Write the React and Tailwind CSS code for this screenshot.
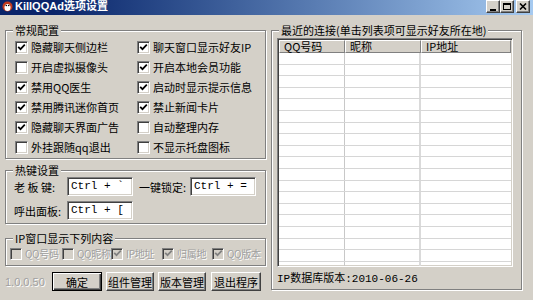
import React from "react";

const Check = ({ checked, disabled, small }) => (
  <span
    className={`${small ? "w-[12px] h-[12px]" : "w-[13px] h-[13px]"} shrink-0 border border-t-[#808080] border-l-[#808080] border-b-white border-r-white shadow-[inset_1px_1px_0_#404040,inset_-1px_-1px_0_#d4d0c8] flex items-center justify-center ${
      disabled ? "bg-[#d4d0c8]" : "bg-white"
    }`}
  >
    {checked && (
      <svg width="9" height="9" viewBox="0 0 9 9">
        <path
          d="M1.2 3.8 L3.5 6.2 L7.8 1.6"
          fill="none"
          stroke={disabled ? "#808080" : "#000"}
          strokeWidth="1.7"
        />
      </svg>
    )}
  </span>
);

const Group = ({ title, className, children }) => (
  <div
    className={`relative border border-[#808080] shadow-[inset_1px_1px_0_#fff,1px_1px_0_#fff] ${className}`}
  >
    <span className="absolute left-[7px] -top-[8px] px-[2px] bg-[#d4d0c8] leading-[14px] text-black whitespace-nowrap">
      {title}
    </span>
    {children}
  </div>
);

const CheckRow = ({ label, checked }) => (
  <div className="h-[20px] flex items-center gap-[3px] whitespace-nowrap">
    <Check checked={checked} />
    <span className="leading-[14px]">{label}</span>
  </div>
);

const Input = ({ value }) => (
  <div className="w-[66px] h-[19px] bg-white border border-t-[#808080] border-l-[#808080] border-b-white border-r-white shadow-[inset_1px_1px_0_#404040,inset_-1px_-1px_0_#d4d0c8] flex items-center pl-[3px] font-['Liberation_Mono',monospace] text-[11px] leading-[13px] whitespace-pre">
    {value}
  </div>
);

const Btn = ({ children, w, def }) => (
  <div
    className={`${w} h-[19px] flex items-center justify-center bg-[#d4d0c8] ${
      def
        ? "border border-black shadow-[inset_1px_1px_0_#fff,inset_-1px_-1px_0_#404040,inset_-2px_-2px_0_#808080]"
        : "border border-t-white border-l-white border-b-[#404040] border-r-[#404040] shadow-[inset_-1px_-1px_0_#808080]"
    } leading-[14px] whitespace-nowrap`}
  >
    {children}
  </div>
);

const DisCheck = ({ label, checked, w }) => (
  <div className={`${w} flex items-center gap-[3px] whitespace-nowrap`}>
    <Check checked={checked} disabled small />
    <span className="leading-[13px] text-[10px] tracking-[-0.3px] text-[#a0a0a0] [text-shadow:1px_1px_0_#fff]">
      {label}
    </span>
  </div>
);

const TitleBtn = ({ children, className }) => (
  <div
    className={`w-[14px] h-[13px] bg-[#d4d0c8] border border-t-white border-l-white border-b-[#404040] border-r-[#404040] shadow-[inset_-1px_-1px_0_#808080] flex items-center justify-center ${className}`}
  >
    {children}
  </div>
);

export default function App() {
  const rows = Array.from({ length: 19 });
  return (
    <div className="w-[533px] h-[300px] bg-[#d4d0c8] overflow-hidden font-['Noto_Sans_CJK_SC','Noto_Sans',sans-serif] text-[11px] text-black">
      {/* title bar */}
      <div className="h-[15px] bg-linear-to-r from-[#0a246a] from-10% to-[#a6caf0] flex items-start pr-[3px]">
        <div className="w-[12px] h-[12px] ml-[1px] flex items-center justify-center">
          <svg width="11" height="11" viewBox="0 0 11 11">
            <circle cx="5.5" cy="5.5" r="5" fill="#c23a1e" />
            <ellipse cx="5.5" cy="6.5" rx="3" ry="3.5" fill="#fff" />
            <circle cx="4.3" cy="4.5" r="0.8" fill="#000" />
            <circle cx="6.7" cy="4.5" r="0.8" fill="#000" />
          </svg>
        </div>
        <span className="ml-[2px] text-white font-bold text-[11px] leading-[13px] font-['Liberation_Sans','Noto_Sans_CJK_SC',sans-serif]">
          KillQQAd选项设置
        </span>
        <div className="ml-auto flex items-start">
          <TitleBtn>
            <span className="w-[6px] h-[2px] bg-black mt-[6px] mr-[1px]" />
          </TitleBtn>
          <TitleBtn>
            <span className="w-[8px] h-[7px] border border-black border-t-2" />
          </TitleBtn>
          <TitleBtn className="ml-[2px]">
            <svg width="8" height="7" viewBox="0 0 8 7">
              <path d="M1 0.5 L7 6.5 M7 0.5 L1 6.5" stroke="#000" strokeWidth="1.6" />
            </svg>
          </TitleBtn>
        </div>
      </div>

      {/* body */}
      <div className="flex pl-[5px] pt-[15px] gap-[5px]">
        {/* left column */}
        <div className="w-[261px] flex flex-col">
          <Group title="常规配置" className="h-[129px] pt-[6px] pl-[9px]">
            <div className="grid grid-cols-[122px_1fr]">
              <CheckRow label="隐藏聊天侧边栏" checked />
              <CheckRow label="聊天窗口显示好友IP" checked />
              <CheckRow label="开启虚拟摄像头" />
              <CheckRow label="开启本地会员功能" checked />
              <CheckRow label="禁用QQ医生" checked />
              <CheckRow label="启动时显示提示信息" checked />
              <CheckRow label="禁用腾讯迷你首页" checked />
              <CheckRow label="禁止新闻卡片" checked />
              <CheckRow label="隐藏聊天界面广告" checked />
              <CheckRow label="自动整理内存" />
              <CheckRow label="外挂跟随qq退出" />
              <CheckRow label="不显示托盘图标" />
            </div>
          </Group>

          <Group title="热键设置" className="mt-[11px] h-[54px] pt-[6px] pl-[8px] flex flex-col gap-[5px]">
            <div className="flex items-center h-[19px]">
              <span className="w-[53px] leading-[14px] whitespace-pre">老 板 键:</span>
              <Input value="Ctrl + `" />
              <span className="ml-[6px] w-[51px] leading-[14px]">一键锁定:</span>
              <Input value="Ctrl + =" />
            </div>
            <div className="flex items-center h-[19px]">
              <span className="w-[53px] leading-[14px]">呼出面板:</span>
              <Input value="Ctrl + [" />
            </div>
          </Group>

          <Group title="IP窗口显示下列内容" className="mt-[14px] h-[28px] pt-[8px] pl-[4px] flex items-start">
            <DisCheck w="w-[52px]" label="QQ号码" />
            <DisCheck w="w-[49px]" label="QQ昵称" />
            <DisCheck w="w-[51px]" label="IP地址" checked />
            <DisCheck w="w-[50px]" label="归属地" checked />
            <DisCheck w="w-[50px]" label="QQ版本" checked />
          </Group>

          <div className="mt-[6px] flex items-center">
            <span className="w-[47px] text-[#a0a0a0] [text-shadow:1px_1px_0_#fff] leading-[14px] font-['Liberation_Sans',sans-serif]">
              1.0.0.50
            </span>
            <Btn w="w-[50px]" def>确定</Btn>
            <div className="w-[4px]" />
            <Btn w="w-[48px]">组件管理</Btn>
            <div className="w-[4px]" />
            <Btn w="w-[48px]">版本管理</Btn>
            <div className="w-[5px]" />
            <Btn w="w-[50px]">退出程序</Btn>
          </div>
        </div>

        {/* right group */}
        <Group
          title="最近的连接(单击列表项可显示好友所在地)"
          className="w-[251px] h-[260px] pt-[7px] pl-[5px] flex flex-col"
        >
          <div className="w-[236px] h-[229px] bg-white border border-t-[#808080] border-l-[#808080] border-b-white border-r-white shadow-[inset_1px_1px_0_#404040,inset_-1px_-1px_0_#d4d0c8] p-[1px] overflow-hidden flex flex-col">
            <div className="h-[13px] flex shrink-0">
              <div className="w-[66px] bg-[#d4d0c8] border-t border-l border-t-white border-l-white border-r border-b border-r-[#808080] border-b-[#808080] pl-[4px] leading-[11px] text-[11px]">
                QQ号码
              </div>
              <div className="w-[76px] bg-[#d4d0c8] border-t border-l border-t-white border-l-white border-r border-b border-r-[#808080] border-b-[#808080] pl-[4px] leading-[11px] text-[11px]">
                昵称
              </div>
              <div className="flex-1 bg-[#d4d0c8] border-t border-l border-t-white border-l-white border-r border-b border-r-[#808080] border-b-[#808080] pl-[4px] leading-[11px] text-[11px]">
                IP地址
              </div>
            </div>
            {rows.map((_, i) => (
              <div key={i} className="h-[11.6px] shrink-0 flex border-b border-[#d6d6d6]">
                <div className="w-[66px] border-r border-[#c8c8c8]" />
                <div className="w-[76px] border-r-2 border-[#dadada]" />
                <div className="flex-1" />
              </div>
            ))}
          </div>
          <div className="mt-[5px] leading-[14px] font-['Liberation_Mono','Noto_Sans_CJK_SC',monospace] text-[11px]">
            IP数据库版本:2010-06-26
          </div>
        </Group>
      </div>
    </div>
  );
}
